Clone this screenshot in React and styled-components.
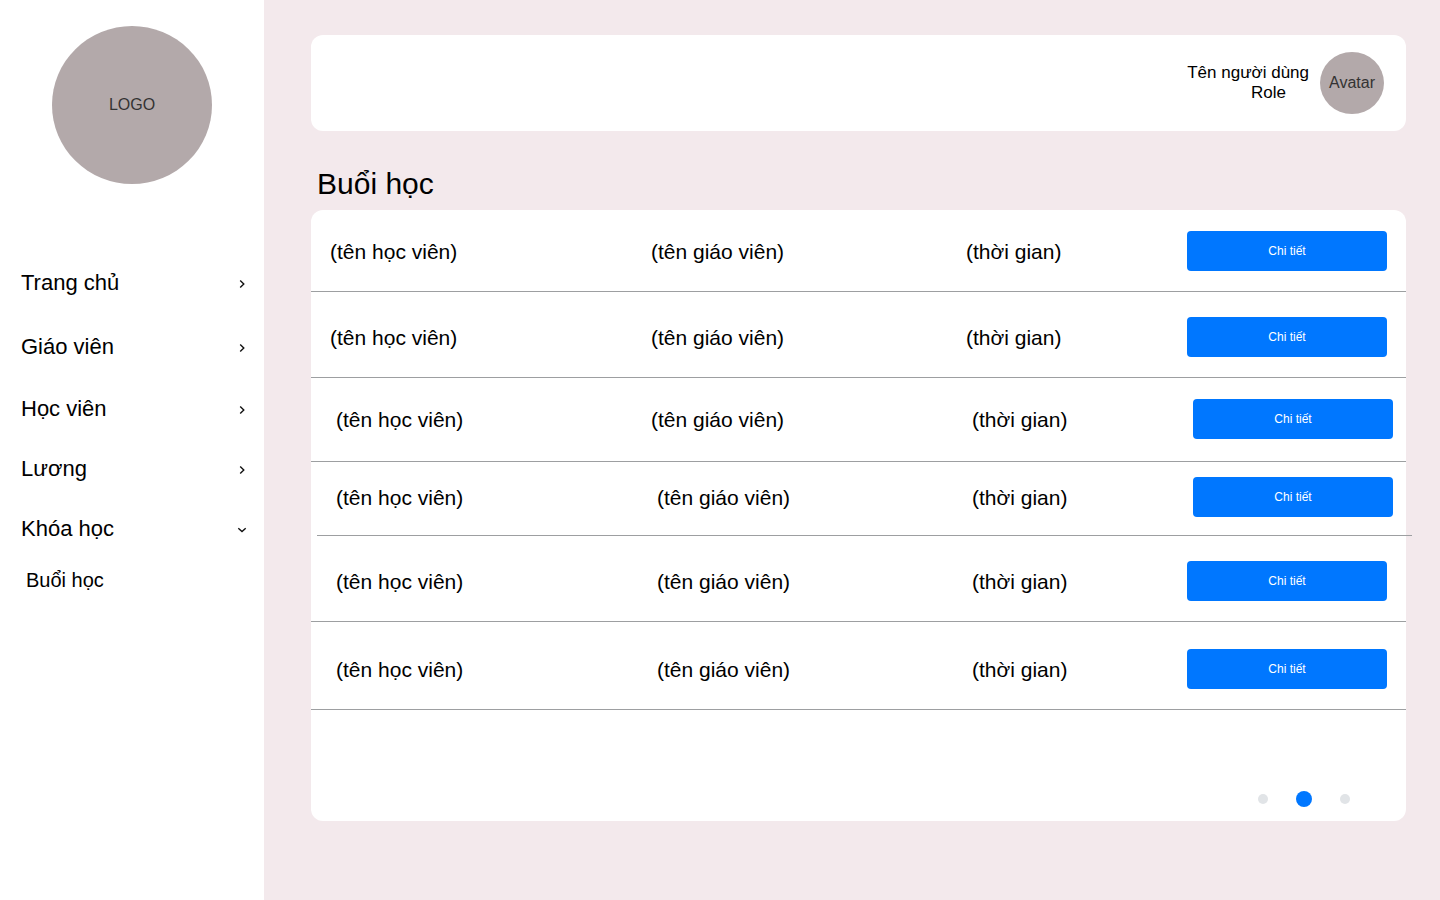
import React, { useState } from "react";
import styled, { createGlobalStyle } from "styled-components";

const GlobalStyle = createGlobalStyle`
  *, *::before, *::after { box-sizing: border-box; }
  body {
    margin: 0;
    background: #f3e9ec;
    color: #000;
    font-family: "Liberation Sans", Arial, sans-serif;
  }
  button { font-family: inherit; }
`;

const Page = styled.div`
  display: flex;
  min-height: 100vh;
`;

const Sidebar = styled.aside`
  flex: 0 0 264px;
  padding-top: 26px;
  background: #fff;
`;

const Ellipse = styled.div`
  display: flex;
  align-items: center;
  justify-content: center;
  flex: none;
  width: ${(p) => p.$width}px;
  height: ${(p) => p.$height}px;
  border-radius: 50%;
  background: #b3a9aa;
  color: #333;
  font-size: 16px;
  line-height: 20px;
`;

const LogoArea = styled.div`
  display: flex;
  justify-content: center;
  margin-bottom: 67px;
`;

const Menu = styled.ul`
  margin: 0;
  padding: 0;
  list-style: none;
`;

const MenuLink = styled.a`
  display: flex;
  align-items: center;
  justify-content: space-between;
  height: ${(p) => (p.$tall ? 64 : 60)}px;
  padding: 0 16px 0 21px;
  color: inherit;
  font-size: 22px;
  text-decoration: none;
`;

const SubLink = styled.a`
  display: flex;
  align-items: center;
  height: 42px;
  padding-left: 26px;
  color: inherit;
  font-size: 20px;
  text-decoration: none;
`;

const ChevronIcon = styled.svg`
  flex: none;
  width: 12px;
  height: 12px;
  margin-top: 2px;
  fill: none;
  stroke: #111;
  stroke-width: 1.4;
`;

const Main = styled.main`
  flex: 1;
  min-width: 0;
  padding: 35px 34px 79px 47px;
`;

const Header = styled.header`
  display: flex;
  align-items: center;
  justify-content: flex-end;
  gap: 11px;
  height: 96px;
  padding-right: 22px;
  border-radius: 12px;
  background: #fff;
`;

const User = styled.div`
  font-size: 17px;
  line-height: 20px;
  text-align: right;
`;

const Role = styled.div`
  padding-right: 23px;
`;

const Title = styled.h1`
  margin: 35px 0 8px;
  padding-left: 6px;
  font-size: 30px;
  font-weight: 400;
  line-height: 36px;
`;

const Card = styled.section`
  border-radius: 12px;
  background: #fff;
`;

const Table = styled.table`
  width: 100%;
  table-layout: fixed;
  border-collapse: collapse;
`;

const Column = styled.col`
  width: ${(p) => p.$width}px;
`;

const Row = styled.tr`
  position: relative;

  > td {
    padding-top: ${(p) => p.$top}px;
    padding-bottom: ${(p) => p.$bottom}px;
  }

  &::after {
    content: "";
    position: absolute;
    bottom: 0;
    left: ${(p) => (p.$overhang ? 6 : 0)}px;
    right: ${(p) => (p.$overhang ? -6 : 0)}px;
    height: 1px;
    background: #9d9fa1;
  }
`;

const Cell = styled.td`
  padding: 0 0 0 ${(p) => (p.$indent ? 25 : 19)}px;
  font-size: 21px;
  line-height: 25px;
  vertical-align: middle;
  white-space: nowrap;
`;

const DetailButton = styled.button`
  display: block;
  width: 200px;
  height: 40px;
  padding: 0;
  border: 0;
  border-radius: 4px;
  background: #0077ff;
  color: #fff;
  font-size: 12px;
  cursor: pointer;
`;

const Pager = styled.nav`
  display: flex;
  align-items: center;
  justify-content: flex-end;
  gap: 28px;
  padding: 81px 56px 14px 0;
`;

const Dot = styled.button`
  width: ${(p) => (p.$active ? 16 : 10)}px;
  height: ${(p) => (p.$active ? 16 : 10)}px;
  padding: 0;
  border: 0;
  border-radius: 50%;
  background: ${(p) => (p.$active ? "#0077ff" : "#e1e4e7")};
  cursor: pointer;
`;

const menu = [
  { label: "Trang chủ", tall: true },
  { label: "Giáo viên", tall: true },
  { label: "Học viên" },
  { label: "Lương" },
  { label: "Khóa học", children: ["Buổi học"] },
];

// indent flags follow the column order: student, teacher, time, action
const sessions = [
  { top: 21, bottom: 21, indent: [false, false, false, false] },
  { top: 25, bottom: 21, indent: [false, false, false, false] },
  { top: 21, bottom: 23, indent: [true, false, true, true] },
  { top: 15, bottom: 19, indent: [true, true, true, true], overhang: true },
  { top: 25, bottom: 21, indent: [true, true, true, false] },
  { top: 27, bottom: 21, indent: [true, true, true, false] },
];

function Chevron({ open }) {
  return (
    <ChevronIcon viewBox="0 0 12 12" aria-hidden="true">
      <path d={open ? "M2.3 4.2 L6 7.6 L9.7 4.2" : "M4.2 2.4 L7.8 6 L4.2 9.6"} />
    </ChevronIcon>
  );
}

export default function App() {
  const [page, setPage] = useState(1);

  return (
    <>
      <GlobalStyle />
      <Page>
        <Sidebar>
          <LogoArea>
            <Ellipse $width={160} $height={158}>LOGO</Ellipse>
          </LogoArea>
          <nav>
            <Menu>
              {menu.map((item) => (
                <li key={item.label}>
                  <MenuLink href="#" $tall={item.tall}>
                    {item.label}
                    <Chevron open={Boolean(item.children)} />
                  </MenuLink>
                  {item.children && (
                    <Menu>
                      {item.children.map((child) => (
                        <li key={child}>
                          <SubLink href="#">{child}</SubLink>
                        </li>
                      ))}
                    </Menu>
                  )}
                </li>
              ))}
            </Menu>
          </nav>
        </Sidebar>
        <Main>
          <Header>
            <User>
              <div>Tên người dùng</div>
              <Role>Role</Role>
            </User>
            <Ellipse $width={64} $height={62}>Avatar</Ellipse>
          </Header>
          <Title>Buổi học</Title>
          <Card>
            <Table>
              <colgroup>
                <Column $width={321} />
                <Column $width={315} />
                <Column $width={221} />
                <Column $width={238} />
              </colgroup>
              <tbody>
                {sessions.map((s, i) => (
                  <Row key={i} $top={s.top} $bottom={s.bottom} $overhang={s.overhang}>
                    <Cell $indent={s.indent[0]}>(tên học viên)</Cell>
                    <Cell $indent={s.indent[1]}>(tên giáo viên)</Cell>
                    <Cell $indent={s.indent[2]}>(thời gian)</Cell>
                    <Cell $indent={s.indent[3]}>
                      <DetailButton type="button">Chi tiết</DetailButton>
                    </Cell>
                  </Row>
                ))}
              </tbody>
            </Table>
            <Pager>
              {[0, 1, 2].map((n) => (
                <Dot
                  key={n}
                  type="button"
                  aria-label={String(n + 1)}
                  $active={n === page}
                  onClick={() => setPage(n)}
                />
              ))}
            </Pager>
          </Card>
        </Main>
      </Page>
    </>
  );
}
